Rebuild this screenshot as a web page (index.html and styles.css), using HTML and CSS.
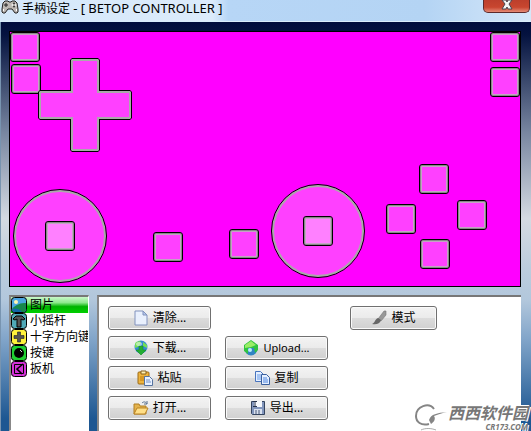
FILE: index.html
```html
<!DOCTYPE html>
<html lang="zh-CN">
<head>
    <meta charset="UTF-8">
    <meta name="viewport" content="width=device-width, initial-scale=1.0">
    <title>手柄设定</title>
    <link rel="stylesheet" href="styles.css">
</head>
<body>

    <header class="titlebar">
        <svg class="app-icon" width="18" height="14" viewBox="0 0 18 14">
            <path d="M4 1h3l1 1h2l1-1h3l2 2 1 6v3l-1 1h-2l-3-4H7l-3 4H2l-1-1V9l1-6z" fill="#bdb8b4" stroke="#222"/>
            <path d="M5 3v4M3 5h4" stroke="#222"/>
            <path d="M2.500 9v2M15.500 9v2" stroke="#fff"/>
            <circle cx="13" cy="3.500" r="1" fill="#333"/>
            <circle cx="13" cy="6.500" r="1" fill="#333"/>
            <circle cx="11.500" cy="5" r="1" fill="#eee"/>
            <circle cx="14.500" cy="5" r="1" fill="#eee"/>
        </svg>
        <h1>手柄设定 <span class="device">- [ BETOP CONTROLLER ]</span></h1>
        <button class="close" aria-label="关闭">
            <svg width="12" height="12" viewBox="0 0 12 12">
                <path d="M1 0h4l1 2 1-2h4L8 4l3 5H7L6 7 5 9H1l3-5z" fill="#f5f5f5" stroke="#4b4650"/>
            </svg>
        </button>
    </header>

    <main class="window">
        <div class="stage">
            <button class="pad l2" aria-label="L2"></button>
            <button class="pad l1" aria-label="L1"></button>
            <button class="pad r2" aria-label="R2"></button>
            <button class="pad r1" aria-label="R1"></button>
            <svg class="dpad" width="94" height="94" viewBox="0 0 94 94">
                <path d="M34 0h26l2 2v30h30l2 2v26l-2 2H62v30l-2 2H34l-2-2V62H2l-2-2V34l2-2h30V2z" fill="#000"/>
                <path d="M34 1h26l1 1v31h31l1 1v26l-1 1H61v31l-1 1H34l-1-1V61H2l-1-1V34l1-1h31V2z" fill="#aaa"/>
                <path d="M35 3h24v32h32v24H59v32H35V59H3V35h32z" fill="#ff40ff"/>
            </svg>
            <div class="stick left"><button class="pad" aria-label="左摇杆"></button></div>
            <div class="stick right"><button class="pad" aria-label="右摇杆"></button></div>
            <button class="pad select" aria-label="Select"></button>
            <button class="pad start" aria-label="Start"></button>
            <button class="pad north" aria-label="1"></button>
            <button class="pad west" aria-label="4"></button>
            <button class="pad east" aria-label="2"></button>
            <button class="pad south" aria-label="3"></button>
        </div>

        <div class="bottom">
            <ul class="parts">
                <li class="selected">
                    <svg width="16" height="16" viewBox="0 0 16 16">
                        <rect x=".5" y=".5" width="15" height="15" rx="3" fill="#4aa5e0" stroke="#000"/>
                        <path d="M1 12c4-5 9-6 14-6v7l-2 2H3l-2-2z" fill="#16884b"/>
                        <path d="M1 12c3-1 7-1 10 3H3l-2-2z" fill="#1266a8"/>
                        <circle cx="5" cy="5" r="2" fill="#fff6b0"/>
                    </svg>
                    图片
                </li>
                <li>
                    <svg width="16" height="16" viewBox="0 0 16 16">
                        <rect x=".5" y=".5" width="15" height="15" rx="3" fill="#50a9b8" stroke="#000"/>
                        <path d="M2 6l3-3h6l3 3-2 1-2-1v8H6V6L4 7z" fill="#555" stroke="#000"/>
                    </svg>
                    小摇杆
                </li>
                <li>
                    <svg width="16" height="16" viewBox="0 0 16 16">
                        <rect x=".5" y=".5" width="15" height="15" rx="3" fill="#fff23c" stroke="#000"/>
                        <path d="M6.500 3h3v3.500H13v3H9.500V13h-3V9.500H3v-3h3.500z" fill="#555" stroke="#222" stroke-width=".6"/>
                    </svg>
                    十字方向键
                </li>
                <li>
                    <svg width="16" height="16" viewBox="0 0 16 16">
                        <rect x=".5" y=".5" width="15" height="15" rx="3" fill="#20cf32" stroke="#000"/>
                        <circle cx="8" cy="8" r="5" fill="#000"/>
                        <path d="M9 5l2 2" stroke="#ddd"/>
                    </svg>
                    按键
                </li>
                <li>
                    <svg width="16" height="16" viewBox="0 0 16 16">
                        <rect x=".5" y=".5" width="15" height="15" rx="3" fill="#d431d8" stroke="#000"/>
                        <path d="M3.500 3.500h9v9h-9z" fill="none" stroke="#000"/>
                        <path d="M12 3L6 8l5 5" fill="none" stroke="#000" stroke-width="1.600"/>
                    </svg>
                    扳机
                </li>
            </ul>

            <section class="panel">
                <div class="actions">
                    <button>
                        <svg width="16" height="16" viewBox="0 0 16 16">
                            <path d="M2 1h8l4 4v10H2z" fill="#e9f0fd" stroke="#8192bd"/>
                            <path d="M10 1v4h4z" fill="#b5c8ee" stroke="#8192bd"/>
                        </svg>
                        清除...
                    </button>
                    <button>
                        <svg width="16" height="16" viewBox="0 0 16 16">
                            <circle cx="8" cy="7" r="6.500" fill="#3589d8"/>
                            <path d="M3 2l4-1 1 2-3 4-3 1V4zM10 2l4 3v3l-4-2z" fill="#74df55"/>
                            <path d="M6 6h4v4h3l-5 5-5-5h3z" fill="#23ad32" stroke="#129027" stroke-width=".6"/>
                            <ellipse cx="6" cy="4" rx="3" ry="2" fill="#fff" opacity=".5"/>
                        </svg>
                        下载...
                    </button>
                    <button>
                        <svg width="16" height="16" viewBox="0 0 16 16">
                            <rect x="1" y="2" width="11" height="12" rx="1" fill="#eeb43e" stroke="#9b6b16"/>
                            <path d="M4 1h5v3H4z" fill="#fff0b0" stroke="#87611d"/>
                            <path d="M3 6h6v5H3z" fill="#d69825"/>
                            <path d="M7.500 6.500h5l3 3v6h-8z" fill="#e8f1ff" stroke="#56739f"/>
                            <path d="M9 10h4M9 12h5" stroke="#7190c8"/>
                        </svg>
                        粘贴
                    </button>
                    <button>
                        <svg width="16" height="16" viewBox="0 0 16 16">
                            <path d="M1 14V4h5l1 2h6v8z" fill="#e4b34d" stroke="#b07e22"/>
                            <path d="M1 14l3-6h11l-3 6z" fill="#ffdf87" stroke="#b98325"/>
                            <path d="M9 3c2-2 4-1 5 1M14 1v3h-3" fill="none" stroke="#58718f"/>
                        </svg>
                        打开...
                    </button>
                </div>
                <div class="actions second">
                    <button class="latin">
                        <svg width="16" height="16" viewBox="0 0 16 16">
                            <circle cx="8" cy="9" r="6.500" fill="#3084c4"/>
                            <path d="M8 0l7 5v5l-3 3-1-5H5v6l-4-3V5z" fill="#2fc340"/>
                            <path d="M8 1l5 4-5 2-6 1V5z" fill="#9aed67"/>
                            <circle cx="7" cy="10" r="2" fill="#b8eff5"/>
                        </svg>
                        Upload...
                    </button>
                    <button>
                        <svg width="16" height="16" viewBox="0 0 16 16">
                            <path d="M1.500 1.500h5l3 3v7h-8z" fill="#e4efff" stroke="#4773bd"/>
                            <path d="M3 5h4M3 7h5M3 9h4" stroke="#699be8"/>
                            <path d="M7.500 4.500h5l3 3v7h-8z" fill="#e4efff" stroke="#395f9e"/>
                            <path d="M9 8h4M9 10h5M9 12h5" stroke="#4f85df"/>
                        </svg>
                        复制
                    </button>
                    <button>
                        <svg width="16" height="16" viewBox="0 0 16 16">
                            <path d="M1.500 1.500h13v13h-12l-1-1z" fill="#8296bd" stroke="#34445f"/>
                            <path d="M4 1h8v6H4z" fill="#f5f7fb"/>
                            <path d="M4 9h8v5H4z" fill="#d9e1ee"/>
                            <path d="M6 10v4M9 10v4" stroke="#485978"/>
                            <path d="M3 1.500h4M5 2v5M3 6.500h4" stroke="#26334c"/>
                        </svg>
                        导出...
                    </button>
                </div>
                <div class="actions mode">
                    <button>
                        <svg width="16" height="16" viewBox="0 0 16 16">
                            <path d="M13 1h2v4l-5 6-3-2z" fill="#999" stroke="#777" stroke-width=".6"/>
                            <path d="M7 8l3 2c-1 4-5 5-9 4 3-1 3-5 6-6z" fill="#666"/>
                        </svg>
                        模式
                    </button>
                </div>
            </section>
        </div>
    </main>

    <div class="watermark">
        <svg width="34" height="28" viewBox="0 0 34 28">
            <path d="M20 6C15-1 2 3 2 13c0 6 5 10 13 8" fill="none" stroke="#858585" stroke-width="2"/>
            <path d="M15 17c2-6 8-7 18-8-6 1-9 3-13 4 2 3 0 6-3 8z" fill="#858585"/>
            <path d="M7 27c4-2 10-2 15 0" fill="none" stroke="#aaa"/>
        </svg>
        <div class="brand">
            <span class="name">西西软件园</span>
            <span class="site">CR173.COM</span>
        </div>
    </div>

</body>
</html>
```

FILE: styles.css
```css
body {
    display: flex;
    flex-direction: column;
    height: 100vh;
    margin: 0;
    overflow: hidden;
    font-family: "Noto Sans", "Noto Sans CJK SC", sans-serif;
    font-size: 12px;
    color: #000;
}

button {
    box-sizing: border-box;
    padding: 0;
    font: inherit;
    color: inherit;
}

.titlebar {
    display: flex;
    align-items: flex-start;
    box-sizing: border-box;
    height: 22px;
    padding-left: 1px;
    background: linear-gradient(90deg, #d5e8fa, #dcebfb 40%, #b7d6f6 43%, #b4d4f4 80%, #d5e7f8);
    border-bottom: 1px solid #d9edfb;
}

.titlebar h1 {
    flex: 1;
    margin: 0 0 0 3px;
    font-size: 12px;
    font-weight: normal;
    line-height: 16px;
}

.device {
    font-size: 13px;
}

.close {
    display: flex;
    justify-content: center;
    width: 47px;
    height: 13px;
    margin-right: 1px;
    background: linear-gradient(#bd3f2c, #c8462f 60%, #e58b76);
    border: 1px solid #5e2a2a;
    border-top: 0;
    border-radius: 0 0 5px 5px;
}

.window {
    display: flex;
    flex: 1;
    flex-direction: column;
    gap: 8px;
    padding: 9px 10px 0 8px;
    min-height: 0;
    background: linear-gradient(#000c3c, #04123f 3%, #7886a0 27%, #d4dae2 48%, #bccddd 60%, #b2c7dc 68%, #7fa3c8 78%, #1d5792 97%);
    border-left: 1px solid #7894b0;
}

/* controller picture */
.stage {
    position: relative;
    box-sizing: border-box;
    height: 256px;
    background: #f0f;
    border: 1px solid #000;
}

.pad {
    position: absolute;
    width: 30px;
    height: 30px;
    background: #ff40ff;
    border: 1px solid #000;
    border-radius: 3px;
    box-shadow: inset 0 0 0 1px #888, inset 0 0 0 2px #c4a4c4;
}

.l2 { left: 0; top: 0; }
.l1 { left: 1px; top: 32px; }
.r2 { right: 0; top: 0; }
.r1 { right: 0; top: 35px; }
.dpad { position: absolute; left: 28px; top: 26px; }
.select { left: 143px; top: 200px; }
.start { left: 219px; top: 197px; }
.north { left: 409px; top: 132px; }
.west { left: 376px; top: 172px; }
.east { left: 447px; top: 168px; }
.south { left: 410px; top: 207px; }

.stick {
    position: absolute;
    display: flex;
    align-items: center;
    justify-content: center;
    box-sizing: border-box;
    width: 94px;
    height: 94px;
    background: #ff40ff;
    border: 1px solid #000;
    border-radius: 50%;
    box-shadow: inset 0 0 0 2px #aaa;
}

.stick.left { left: 3px; top: 157px; }
.stick.right { left: 261px; top: 152px; }

.stick .pad {
    position: static;
    background: #ff80ff;
}

/* list and buttons */
.bottom {
    display: flex;
    flex: 1;
    gap: 8px;
    min-height: 0;
}

.parts {
    box-sizing: border-box;
    width: 80px;
    margin: 0;
    padding: 0;
    overflow: hidden;
    list-style: none;
    background: #fff;
    border: 1px solid #fff;
    border-top: 2px solid #777;
    border-left: 2px solid #888;
}

.parts li {
    display: flex;
    align-items: center;
    gap: 3px;
    height: 16px;
    line-height: 16px;
    white-space: nowrap;
}

.parts svg {
    flex: none;
}

.parts .selected {
    background: linear-gradient(#c9f7c9, #8ee98e 35%, #00b400 60%, #00d000);
}

.panel {
    display: flex;
    flex: 1;
    align-items: flex-start;
    padding: 9px;
    background: #fff;
    border-top: 2px solid #777;
    border-left: 2px solid #888;
}

.actions {
    display: flex;
    flex-direction: column;
    gap: 6px;
    width: 103px;
}

.actions.second {
    margin: 30px 22px 0 14px;
}

.actions.mode {
    width: 87px;
}

.actions button {
    display: flex;
    align-items: center;
    justify-content: center;
    gap: 4px;
    height: 24px;
    background: linear-gradient(#f3f3f3, #ebebeb 49%, #dcdcdc 50%, #d0d0d0);
    border: 1px solid #707070;
    border-radius: 3px;
    box-shadow: inset 0 0 0 1px #fafafa;
    line-height: 16px;
}

.actions .latin {
    font-size: 11px;
}

.watermark {
    position: absolute;
    right: 3px;
    bottom: 0;
    display: flex;
    color: #777;
    text-shadow: 1px 1px #fff, -1px -1px #fff;
}

.brand {
    display: flex;
    flex-direction: column;
    font-style: italic;
    font-weight: bold;
}

.brand .name {
    font-size: 16px;
    line-height: 20px;
}

.brand .site {
    align-self: flex-end;
    font-size: 8px;
    line-height: 8px;
}
```
